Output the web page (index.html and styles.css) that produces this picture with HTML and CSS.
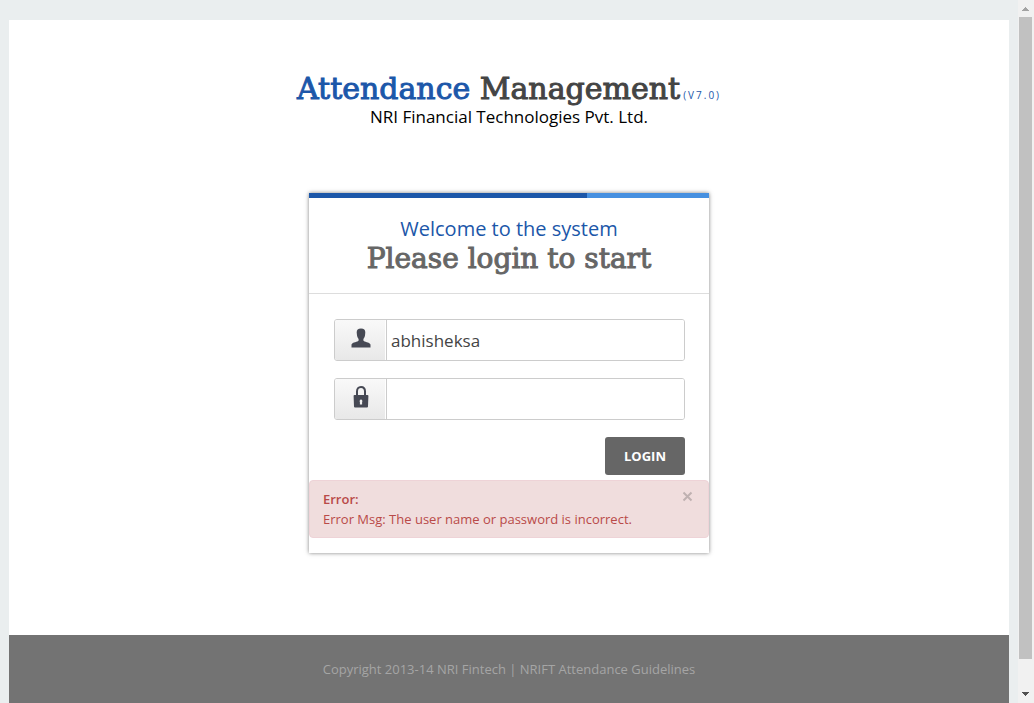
FILE: index.html
```html
<!DOCTYPE html>
<html lang="en">
<head>
<meta charset="utf-8">
<title>Attendance Management</title>
<link rel="stylesheet" href="styles.css">
</head>
<body>
<div class="shell">
  <div class="page">
    <header class="brand">
      <h1 class="brand-title"><span class="brand-first">Attendance</span> Management<small class="version">(V7.0)</small></h1>
      <p class="company">NRI Financial Technologies Pvt. Ltd.</p>
    </header>
    <main class="card">
      <div class="stripe"></div>
      <div class="card-head">
        <p class="welcome">Welcome to the system</p>
        <h2 class="card-title">Please login to start</h2>
      </div>
      <form class="login">
        <div class="field">
          <label class="addon" for="user" aria-label="User name">
            <svg width="20" height="20" viewBox="0 0 20 20" fill="#464954"><path d="M10 0.500C7 0.500 5.600 1.800 5.700 4.500L6 7.500C6.300 9.500 7.300 10.300 7.600 11V12.500C7 14.200 1.500 14 0.500 16.500V19.500H19.500V16.500C18.500 14 13 14.200 12.400 12.500V11C12.700 10.300 13.700 9.500 14 7.500L14.300 4.500C14.400 1.800 13 0.500 10 0.500Z"/></svg>
          </label>
          <input class="text" id="user" type="text" value="abhisheksa">
        </div>
        <div class="field">
          <label class="addon" for="pass" aria-label="Password">
            <svg width="16" height="22" viewBox="0 0 16 22"><path d="M4 10V5.500C4 2.700 5.500 1 8 1S12 2.700 12 5.500V10" fill="none" stroke="#464954" stroke-width="2"/><path fill="#464954" fill-rule="evenodd" d="M1.500 9H14.500Q15.500 9 15.400 10L15 20.500Q15 21.500 14 21.500H2Q1 21.500 1 20.500L0.600 10Q0.500 9 1.500 9ZM8 13.500A1.600 1.600 0 0 0 6.900 16V18.500H9.100V16A1.600 1.600 0 0 0 8 13.500Z"/></svg>
          </label>
          <input class="text" id="pass" type="password">
        </div>
        <button class="submit" type="button">LOGIN</button>
      </form>
      <div class="alert" role="alert">
        <div class="alert-text"><strong>Error:</strong><br>Error Msg: The user name or password is incorrect.</div>
        <button class="close" type="button" aria-label="Close"><svg width="11" height="11" viewBox="0 0 11 11"><path d="M1.500 1.500L9.500 9.500M9.500 1.500L1.500 9.500" stroke="#bfb1b1" stroke-width="2"/></svg></button>
      </div>
    </main>
    <footer class="footer">Copyright 2013-14 NRI Fintech | NRIFT Attendance Guidelines</footer>
  </div>
  <div class="scrollbar" aria-hidden="true">
    <svg class="arrow" width="7" height="4" viewBox="0 0 7 4" shape-rendering="crispEdges"><path d="M3 0h1v1h1v1h1v1h1v1H0V3h1V2h1V1h1z" fill="#a3a3a3"/></svg>
    <div class="track"><div class="thumb"></div></div>
    <svg class="arrow" width="7" height="4" viewBox="0 0 7 4" shape-rendering="crispEdges"><path d="M0 0h7v1H6v1H5v1H4v1H3V3H2V2H1V1H0z" fill="#505050"/></svg>
  </div>
</div>
</body>
</html>
```
FILE: styles.css
```css
* { box-sizing: border-box; }
body {
  margin: 0;
  background: #eaeeef;
  font-family: "Open Sans", sans-serif;
  font-size: 13px;
  line-height: 20px;
}
h1, h2, p { margin: 0; font-weight: 400; }
svg { display: block; }
.shell { display: flex; height: 100vh; }
.page {
  flex: 1;
  display: flex;
  flex-direction: column;
  margin: 20px 9px 0;
  background: #fff;
}
.brand { padding-top: 49px; text-align: center; }
.brand-title {
  font-family: "Roboto Slab", "DejaVu Serif", serif;
  font-size: 30px;
  line-height: 40px;
  color: #444;
  -webkit-text-stroke: 1px currentColor;
}
.brand-first { color: #1c57a9; }
.version {
  margin-left: 3px;
  font-family: "Open Sans", sans-serif;
  font-size: 10px;
  line-height: 12px;
  letter-spacing: 2px;
  color: #1c57a9;
  -webkit-text-stroke: 0;
}
.company { font-size: 17px; line-height: 16px; color: #000; }
.card {
  width: 400px;
  margin: 68px auto 0;
  padding-bottom: 15px;
  background: #fff;
  box-shadow: 0 0 4px rgba(0, 0, 0, 0.5);
}
.stripe { height: 5px; background: linear-gradient(to right, #1c57a9 278px, #4690e0 278px); }
.card-head { padding: 19px 0 16px; border-bottom: 1px solid #ddd; text-align: center; }
.welcome { font-size: 20px; line-height: 24px; color: #1c57a9; }
.card-title {
  font-family: "Roboto Slab", "DejaVu Serif", serif;
  font-size: 28px;
  line-height: 36px;
  color: #666;
  -webkit-text-stroke: 1px currentColor;
}
.login { display: flex; flex-direction: column; gap: 17px; padding: 25px 24px 5px 25px; }
.field { display: flex; height: 42px; border: 1px solid #ccc; border-radius: 3px; overflow: hidden; }
.addon {
  display: flex;
  justify-content: center;
  align-items: center;
  width: 52px;
  padding-bottom: 4px;
  border-right: 1px solid #ccc;
  box-shadow: inset -1px 0 #fff;
  background: linear-gradient(#f9f9f9, #e8e8e8);
}
.text {
  flex: 1;
  min-width: 0;
  padding: 0 4px;
  border: 0;
  outline: 0;
  background: #fff;
  font: 17px "Open Sans", sans-serif;
  color: #444;
}
.submit {
  align-self: flex-end;
  width: 80px;
  height: 38px;
  padding: 0;
  border: 0;
  border-radius: 3px;
  background: #666;
  color: #fff;
  font: 700 13px "Open Sans", sans-serif;
}
.alert {
  display: flex;
  justify-content: space-between;
  align-items: flex-start;
  padding: 8px 15px 8px 13px;
  border: 1px solid #eed3d7;
  border-radius: 4px;
  background: #f0dddd;
  color: #b94a48;
}
.alert strong { font-weight: 600; }
.close { margin-top: 2px; padding: 0; border: 0; background: none; }
.footer {
  flex: 1;
  margin-top: 82px;
  padding-top: 24px;
  background: #737373;
  color: #a5a5a5;
  text-align: center;
}
.scrollbar {
  display: flex;
  flex-direction: column;
  align-items: center;
  gap: 6px;
  width: 16px;
  padding: 7px 1px 7px 0;
  background: #f1f1f1;
}
.track { flex: 1; width: 13px; }
.thumb { height: 96%; background: #c1c1c1; }
```
